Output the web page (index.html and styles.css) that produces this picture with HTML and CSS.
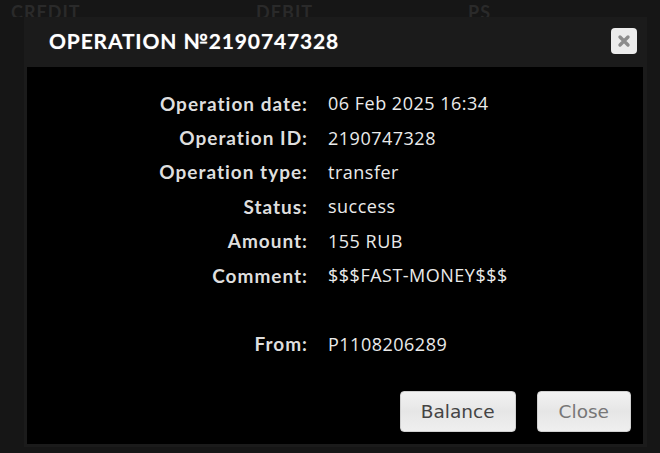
FILE: index.html
```html
<!DOCTYPE html>
<html lang="en">

<head>
    <meta charset="UTF-8">
    <meta name="viewport" content="width=device-width, initial-scale=1.0">
    <title>Operation</title>
    <link rel="stylesheet" href="styles.css">
</head>

<body>
    <div class="page">
        <div class="table-head">
            <span class="col-credit">CREDIT</span>
            <span class="col-debit">DEBIT</span>
            <span class="col-ps">PS</span>
        </div>
        <div class="modal">
            <div class="modal-header">
                <h2>OPERATION №2190747328</h2>
                <a href="javascript:;" class="btn-x">
                    <svg width="14" height="14" viewBox="0 0 14 14">
                        <path d="M3 3 L11 11 M11 3 L3 11" stroke="#8c8c8c" stroke-width="3.4" stroke-linecap="round" />
                    </svg>
                </a>
            </div>
            <div class="modal-body">
                <dl class="details">
                    <dt>Operation date:</dt><dd>06 Feb 2025 16:34</dd>
                    <dt>Operation ID:</dt><dd>2190747328</dd>
                    <dt>Operation type:</dt><dd>transfer</dd>
                    <dt>Status:</dt><dd>success</dd>
                    <dt>Amount:</dt><dd>155 RUB</dd>
                    <dt>Comment:</dt><dd>$$$FAST-MONEY$$$</dd>
                    <dt></dt><dd></dd>
                    <dt>From:</dt><dd>P1108206289</dd>
                </dl>
                <div class="modal-footer">
                    <a href="javascript:;" class="btn">Balance</a>
                    <a href="javascript:;" class="btn btn-close">Close</a>
                </div>
            </div>
        </div>
    </div>
</body>

</html>
```

FILE: styles.css
```css
* {
    margin: 0;
    padding: 0;
    box-sizing: border-box;
    text-decoration: none;
}

body {
    background-color: #161616;
    font-family: Lato, "Open Sans", sans-serif;
    overflow: hidden;
}

.page {
    width: 660px;
    height: 453px;
}

.table-head {
    display: flex;
    height: 17px;
    padding-left: 11px;
    color: #2a2a2a;
    font-weight: 700;
    font-size: 18px;
    letter-spacing: 1px;
    line-height: 24px;
    overflow: hidden;
}

.col-credit {
    width: 245px;
}

.col-debit {
    width: 212px;
}

.modal {
    margin-left: 24px;
    width: 623px;
    height: 430px;
    background-color: #1b1b1b;
    padding: 0 4px 3px 3px;
    display: flex;
    flex-direction: column;
}

.modal-header {
    height: 50px;
    display: flex;
    align-items: center;
    justify-content: space-between;
    padding: 0 6px 4px 22px;
}

.modal-header h2 {
    color: #fff;
    font-size: 21px;
    font-weight: 700;
    letter-spacing: 0.85px;
    text-shadow: 0 0 1px rgba(255, 255, 255, 0.4);
}

.btn-x {
    display: flex;
    align-items: center;
    justify-content: center;
    width: 26px;
    height: 26px;
    margin-top: 2px;
    border-radius: 4px;
    background-color: #ececec;
}

.modal-body {
    flex: 1;
    background-color: #000;
    display: flex;
    flex-direction: column;
    justify-content: space-between;
    padding: 19px 12px 12px 0;
}

.details {
    display: grid;
    grid-template-columns: 281px 1fr;
    column-gap: 20px;
    grid-auto-rows: 34.4px;
    align-items: center;
    color: #ebebeb;
    font-family: "Open Sans", sans-serif;
    font-size: 18px;
    letter-spacing: 0.5px;
}

.details dt {
    text-align: right;
    font-family: Lato, sans-serif;
    font-size: 19px;
    font-weight: 700;
    letter-spacing: 1px;
    color: #dedede;
}

.modal-footer {
    display: flex;
    justify-content: flex-end;
    gap: 21px;
}

.btn {
    display: block;
    height: 41px;
    padding: 0 20px;
    border-radius: 4px;
    background: linear-gradient(#f2f2f2, #e6e6e6 50%, #efefef);
    border: 1px solid #d0d0d0;
    color: #444;
    font-family: "DejaVu Sans", sans-serif;
    font-size: 18.5px;
    line-height: 39px;
}

.btn-close {
    color: #777;
    padding: 0 21px;
}
```
